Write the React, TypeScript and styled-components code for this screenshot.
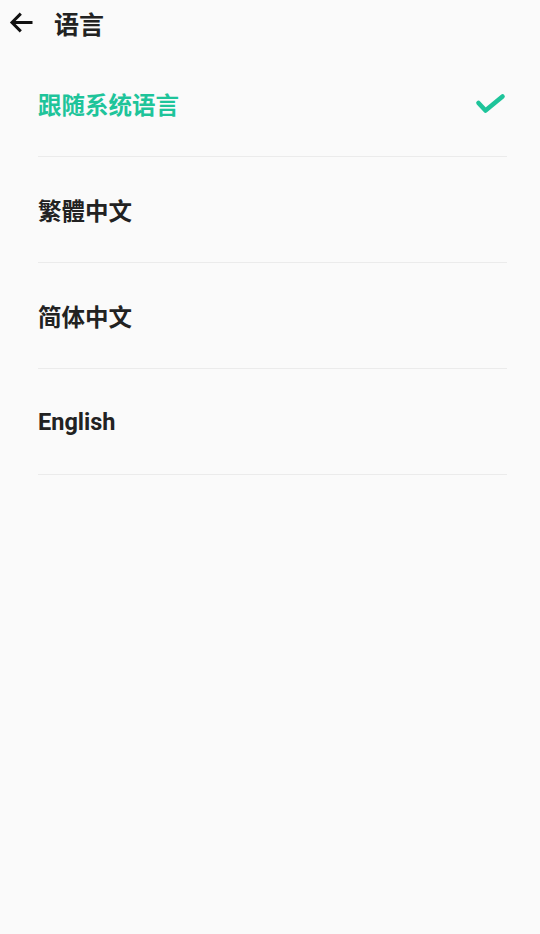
import { createGlobalStyle } from "styled-components";
import styled from "styled-components";

const languages = [
  { key: "system", label: "跟随系统语言" },
  { key: "zh-TW", label: "繁體中文" },
  { key: "zh-CN", label: "简体中文" },
  { key: "en", label: "English" },
];

const GlobalStyle = createGlobalStyle`
  html, body {
    margin: 0;
    padding: 0;
    background: #fafafa;
  }
  body {
    font-family: Roboto, "Noto Sans CJK SC", sans-serif;
    color: #222222;
  }
`;

const App = (): JSX.Element => {
  const selected = "system";

  return (
    <Page>
      <GlobalStyle />
      <Header>
        <BackButton aria-label="back">
          <svg width="24" height="24" viewBox="0 0 24 24">
            <path
              d="M23.5 11.5H3.5 M11.8 2.6L3 11.5L11.8 20.4"
              fill="none"
              stroke="#111"
              strokeWidth="3"
              strokeLinejoin="miter"
            />
          </svg>
        </BackButton>
        <Title>语言</Title>
      </Header>

      <List>
        {languages.map((lang) => (
          <Row key={lang.key}>
            <Label active={lang.key === selected}>{lang.label}</Label>
            {lang.key === selected && (
              <svg width="32" height="24" viewBox="0 0 32 24">
                <polyline
                  points="3.5,9 10.5,16.5 27.5,2.5"
                  fill="none"
                  stroke="#1ec49a"
                  strokeWidth="4.6"
                  strokeLinecap="round"
                  strokeLinejoin="round"
                  transform="translate(0,2)"
                />
              </svg>
            )}
          </Row>
        ))}
      </List>
    </Page>
  );
};

export default App;

/* =================================================== */
const Page = styled.div`
  width: 540px;
  min-height: 934px;
  background: #fafafa;
`;

const Header = styled.div`
  height: 51px;
  display: flex;
  align-items: center;
  padding-bottom: 5px;
  box-sizing: border-box;
`;

const BackButton = styled.button`
  border: none;
  background: none;
  padding: 0;
  margin-left: 9px;
  width: 24px;
  height: 24px;
  display: flex;
  align-items: center;
  justify-content: center;
`;

const Title = styled.h1`
  margin: 0 0 0 21px;
  font-size: 25px;
  font-weight: 700;
  color: #222;
  font-family: Roboto, "Noto Sans CJK SC", sans-serif;
`;

const List = styled.div`
  display: flex;
  flex-direction: column;
  padding: 0 33px 0 38px;
`;

const Row = styled.div`
  height: 105px;
  display: flex;
  align-items: center;
  justify-content: space-between;
  border-bottom: 1px solid #ebebeb;
`;

const Label = styled.span<{ active?: boolean }>`
  font-size: 23.5px;
  font-weight: 700;
  color: ${(p) => (p.active ? "#1ec49a" : "#222")};
  font-family: Roboto, "Noto Sans CJK SC", sans-serif;
`;
